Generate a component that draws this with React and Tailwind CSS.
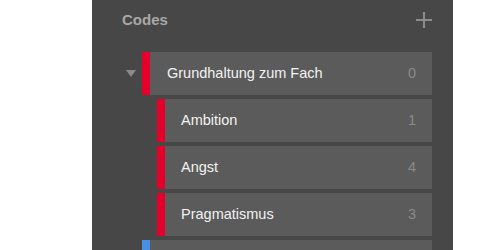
import React from 'react';

const children = [
  { name: 'Ambition', count: 1 },
  { name: 'Angst', count: 4 },
  { name: 'Pragmatismus', count: 3 },
];

const CodeRow = ({ name, count, color, indent }) => (
  <div className={`flex h-[43px] ${indent ? 'ml-[65px]' : ''}`}>
    <div className={`w-[8px] ${color}`} />
    <div className={`flex flex-1 items-center justify-between bg-[#5b5b5b] pr-[16px] text-[14.5px] ${indent ? 'pl-[16px]' : 'pl-[17px]'}`}>
      <span className="text-[#f2f2f2]">{name}</span>
      <span className="text-[#8a8a8a]">{count}</span>
    </div>
  </div>
);

const App = () => {
  return (
    <div className="h-screen w-full bg-white font-['Liberation_Sans',Arial,sans-serif]">
      <div className="ml-[92px] h-[250px] w-[361px] overflow-hidden bg-[#474747] pr-[21px]">
        {/* header */}
        <div className="mb-[12px] flex h-[40px] items-center justify-between pl-[30px]">
          <span className="text-[15px] font-bold text-[#a8a8a8]">Codes</span>
          <svg width="16" height="16" viewBox="0 0 16 16" className="text-[#8c8c8c]">
            <path d="M8 0v16M0 8h16" stroke="currentColor" strokeWidth="2" />
          </svg>
        </div>

        <div className="flex flex-col gap-[4px]">
          {/* parent code */}
          <div className="flex h-[43px]">
            <div className="flex w-[50px] items-center pl-[34px]">
              <svg width="10" height="7" viewBox="0 0 10 7" className="text-[#8a8a8a]">
                <polygon points="0,0 10,0 5,7" fill="currentColor" />
              </svg>
            </div>
            <div className="w-[8px] bg-[#e4002b]" />
            <div className="flex flex-1 items-center justify-between bg-[#5b5b5b] pl-[17px] pr-[16px] text-[14.5px]">
              <span className="text-[#f2f2f2]">Grundhaltung zum Fach</span>
              <span className="text-[#8a8a8a]">0</span>
            </div>
          </div>

          {children.map((c) => (
            <CodeRow key={c.name} name={c.name} count={c.count} color="bg-[#e4002b]" indent />
          ))}

          <div className="flex h-[43px] pl-[50px]">
            <div className="w-[8px] bg-[#4a90e2]" />
            <div className="flex-1 bg-[#5b5b5b]" />
          </div>
        </div>
      </div>
    </div>
  );
};

export default App;
